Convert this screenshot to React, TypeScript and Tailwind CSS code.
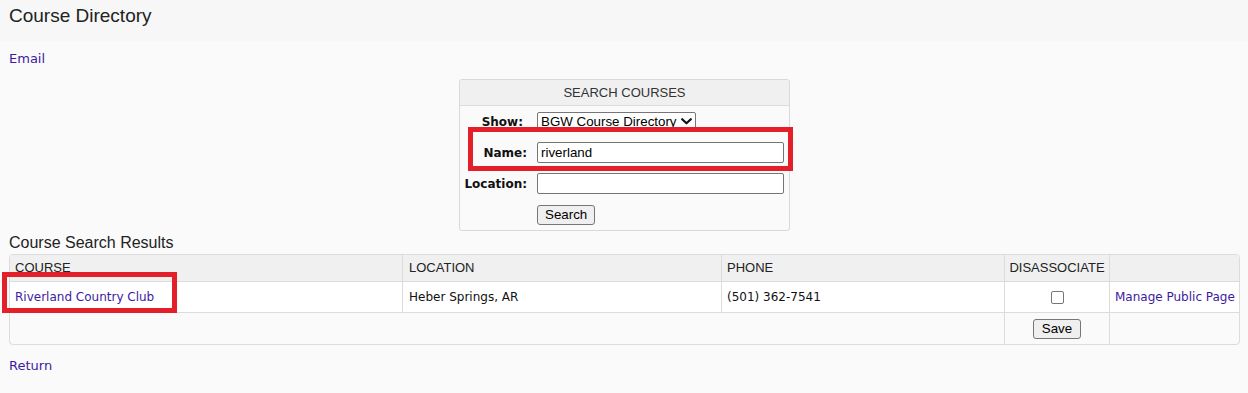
import React from "react";

const verdana = { fontFamily: '"DejaVu Sans", Verdana, sans-serif' };
const arial = { fontFamily: '"Liberation Sans", Arial, sans-serif' };

function Chevron() {
  return (
    <svg width="11" height="7" viewBox="0 0 11 7" className="block">
      <path d="M1.2 1.2 L5.5 5.3 L9.8 1.2" fill="none" stroke="#111" strokeWidth="2.2" strokeLinecap="round" strokeLinejoin="round" />
    </svg>
  );
}

export default function App() {
  return (
    <div className="relative w-[1248px] h-[393px] bg-[#fafafa] text-[#222] overflow-hidden" style={arial}>
      <div className="h-[41px] bg-[#f7f7f7] pl-[9px] pt-[5px]">
        <h1 className="text-[19px] leading-[22px] font-normal text-[#222]">Course Directory</h1>
      </div>

      <div className="pl-[9px] pr-[8px]">
        <div className="mt-[10px] h-[16px] text-[13px] leading-[16px]" style={verdana}>
          <a className="text-[#3d1aa0]">Email</a>
        </div>

        {/* Search box */}
        <div className="mt-[12px] flex justify-center">
          <div className="relative w-[331px] border border-[#d9d9d9] rounded-[3px] bg-[#fafafa]">
            <div className="h-[26px] bg-[#f0f0f0] border-b border-[#dcdcdc] flex items-center justify-center text-[13px] text-[#333] rounded-t-[3px]">
              SEARCH COURSES
            </div>
            <div className="grid grid-cols-[62px_247px] gap-x-[10px] pl-[5px] pr-[7px]">
              <div className="h-[31px] flex items-center justify-end pr-[4px] text-[12px] font-bold text-[#111]" style={verdana}>Show:</div>
              <div className="h-[31px] flex items-center">
                <div className="w-[159px] h-[19px] border border-[#767676] rounded-[2px] bg-white flex items-center justify-between pl-[3px] pr-[3px] text-[13.33px] leading-[16px] text-black overflow-hidden">
                  <span className="whitespace-nowrap">BGW Course Directory</span>
                  <Chevron />
                </div>
              </div>

              <div className="h-[31px] flex items-center justify-end text-[12px] font-bold text-[#111]" style={verdana}>Name:</div>
              <div className="h-[31px] flex items-center">
                <div className="w-[247px] h-[21px] border border-[#767676] rounded-[2px] bg-white pl-[3px] flex items-center text-[13.33px] text-black">
                  riverland
                </div>
              </div>

              <div className="h-[31px] flex items-center justify-end text-[12px] font-bold text-[#111]" style={verdana}>Location:</div>
              <div className="h-[31px] flex items-center">
                <div className="w-[247px] h-[21px] border border-[#767676] rounded-[2px] bg-white" />
              </div>

              <div className="h-[31px]" />
              <div className="h-[31px] flex items-center">
                <button className="h-[20px] px-[7px] border border-[#767676] rounded-[3px] bg-[#efefef] text-[13.33px] leading-[16px] text-black">
                  Search
                </button>
              </div>
            </div>
            <div className="absolute left-[8px] top-[47px] w-[325px] h-[44px] border-[5px] border-[#e3202a]" />
          </div>
        </div>

        <div className="mt-[3px] text-[16px] leading-[18px] text-[#222]">Course Search Results</div>

        {/* Results table */}
        <div className="mt-[2px] border border-[#dcdcdc] rounded-[4px] bg-[#fafafa]">
          <div className="grid grid-cols-[392px_319px_283px_105px_1fr] h-[27px] bg-[#f0f0f0] border-b border-[#dcdcdc] text-[13px] text-[#222] rounded-t-[4px]">
            <div className="flex items-center pl-[5px]">COURSE</div>
            <div className="flex items-center pl-[6px] border-l border-[#dcdcdc]">LOCATION</div>
            <div className="flex items-center pl-[5px] border-l border-[#dcdcdc]">PHONE</div>
            <div className="flex items-center justify-center border-l border-[#dcdcdc]">DISASSOCIATE</div>
            <div className="border-l border-[#dcdcdc]" />
          </div>
          <div className="grid grid-cols-[392px_319px_283px_105px_1fr] h-[31px] bg-white border-b border-[#dcdcdc] text-[12px] text-[#111]" style={verdana}>
            <div className="flex items-center pl-[5px]"><a className="text-[#3d1aa0]">Riverland Country Club</a></div>
            <div className="flex items-center pl-[6px] border-l border-[#dcdcdc]">Heber Springs, AR</div>
            <div className="flex items-center pl-[5px] border-l border-[#dcdcdc]">(501) 362-7541</div>
            <div className="flex items-center justify-center border-l border-[#dcdcdc]">
              <span className="block w-[13px] h-[13px] border border-[#767676] rounded-[2px] bg-white" />
            </div>
            <div className="flex items-center pl-[5px] border-l border-[#dcdcdc]"><a className="text-[#3d1aa0] whitespace-nowrap">Manage Public Page</a></div>
          </div>
          <div className="grid grid-cols-[392px_319px_283px_105px_1fr] h-[31px]">
            <div className="col-span-3" />
            <div className="flex items-center justify-center border-l border-[#dcdcdc]">
              <button className="h-[20px] px-[8px] border border-[#767676] rounded-[3px] bg-[#efefef] text-[13.33px] leading-[16px] text-black">
                Save
              </button>
            </div>
            <div className="border-l border-[#dcdcdc]" />
          </div>
        </div>

        <div className="mt-[13px] h-[16px] text-[13px] leading-[16px]" style={verdana}>
          <a className="text-[#3d1aa0]">Return</a>
        </div>
      </div>

      <div className="absolute left-[2px] top-[272px] w-[175px] h-[41px] border-[5px] border-[#e3202a]" />
    </div>
  );
}
